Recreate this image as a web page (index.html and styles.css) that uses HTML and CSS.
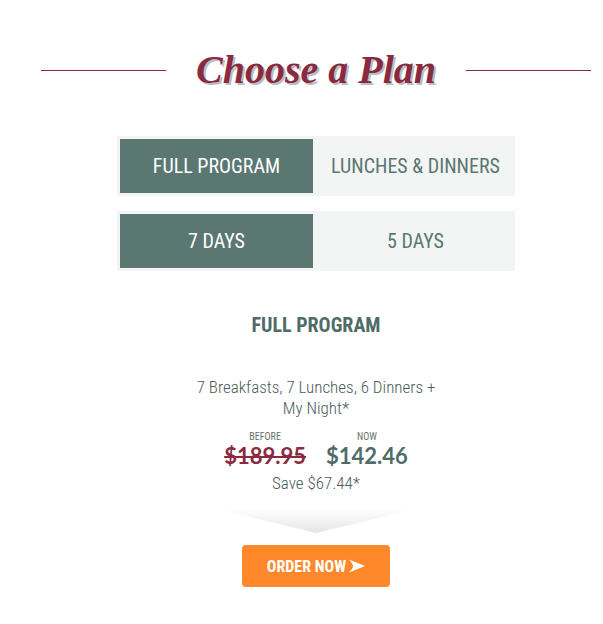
FILE: index.html
```html
<!DOCTYPE html>
<html lang="en">
<head>
    <meta charset="UTF-8">
    <meta name="viewport" content="width=device-width, initial-scale=1.0">
    <title>Choose a Plan</title>
    <link rel="stylesheet" href="styles.css">
</head>
<body>
    <main class="plans">
        <h1 class="plans-title"><span>Choose a Plan</span></h1>

        <div class="toggle" role="group" aria-label="Program">
            <button type="button" class="active" aria-pressed="true">FULL PROGRAM</button>
            <button type="button" aria-pressed="false">LUNCHES &amp; DINNERS</button>
        </div>
        <div class="toggle" role="group" aria-label="Days">
            <button type="button" class="active" aria-pressed="true">7 DAYS</button>
            <button type="button" aria-pressed="false">5 DAYS</button>
        </div>

        <section class="plan">
            <h2>FULL PROGRAM</h2>
            <p class="meals">7 Breakfasts, 7 Lunches, 6 Dinners +<br>My Night*</p>
            <div class="prices">
                <div class="price">
                    <span class="label">BEFORE</span>
                    <del>$189.95</del>
                </div>
                <div class="price">
                    <span class="label">NOW</span>
                    <strong>$142.46</strong>
                </div>
            </div>
            <p class="save">Save $67.44*</p>
            <div class="pointer"></div>
            <button type="button" class="order">
                ORDER NOW
                <svg width="16" height="14" viewBox="0 0 16 14" aria-hidden="true">
                    <path d="M0 0.5 L16 7 L0 13.5 Q4 9.5 4 7 Q4 4.5 0 0.5 Z" fill="#fff"/>
                </svg>
            </button>
        </section>
    </main>
</body>
</html>
```
FILE: styles.css
```css
body {
    margin: 0;
    background: #fff;
    color: #4f6c68;
    font-family: "Roboto Condensed", "Liberation Sans Narrow", "Liberation Sans", sans-serif;
}
button {
    font-family: inherit;
    border: none;
    cursor: pointer;
}
.plans {
    padding: 36px 12px 36px 41px;
}
.plans-title {
    display: flex;
    align-items: center;
    gap: 30px;
    margin: 0 0 32px;
    color: #8a2a40;
    font: italic bold 40px/68px "Liberation Serif", serif;
    text-shadow: 2px 2px 0 #b9bfbc;
    white-space: nowrap;
}
.plans-title::before,
.plans-title::after {
    content: "";
    flex: 1;
    height: 1px;
    background: #8a2a40;
}
.toggle {
    display: grid;
    grid-template-columns: 1fr 1fr;
    gap: 6px;
    box-sizing: border-box;
    max-width: 398px;
    margin: 0 auto 15px;
    padding: 3px;
    background: #f3f5f4;
}
.toggle button {
    height: 54px;
    padding: 0;
    background: transparent;
    color: #5a7772;
    font-size: 20px;
    white-space: nowrap;
}
.toggle .active {
    background: #5a7772;
    color: #fff;
}
.plan {
    display: flex;
    flex-direction: column;
    align-items: center;
    padding-top: 24px;
    text-align: center;
}
.plan h2 {
    margin: 0 0 37px;
    font-size: 20px;
    line-height: 30px;
}
.meals,
.save {
    margin: 0;
    color: #4d5c58;
    font-size: 17px;
    font-weight: 300;
    line-height: 21px;
}
.prices {
    display: flex;
    gap: 20px;
    margin: 12px 0 4px;
}
.price {
    display: flex;
    flex-direction: column;
}
.price .label {
    color: #66736f;
    font-size: 10px;
    line-height: 12px;
}
.price del,
.price strong {
    font: bold 22px/26px Lato, sans-serif;
}
.price del {
    color: #8a2a40;
}
.pointer {
    width: 200px;
    height: 24px;
    margin: 15px 0 12px;
    background: linear-gradient(#fff, #e4e6e5);
    clip-path: polygon(0 0, 100% 0, 50% 100%);
}
.order {
    display: flex;
    align-items: center;
    gap: 3px;
    height: 42px;
    padding: 0 25px;
    border-radius: 4px;
    background: #ff882b;
    color: #fff;
    font-size: 16px;
    font-weight: bold;
}
```
